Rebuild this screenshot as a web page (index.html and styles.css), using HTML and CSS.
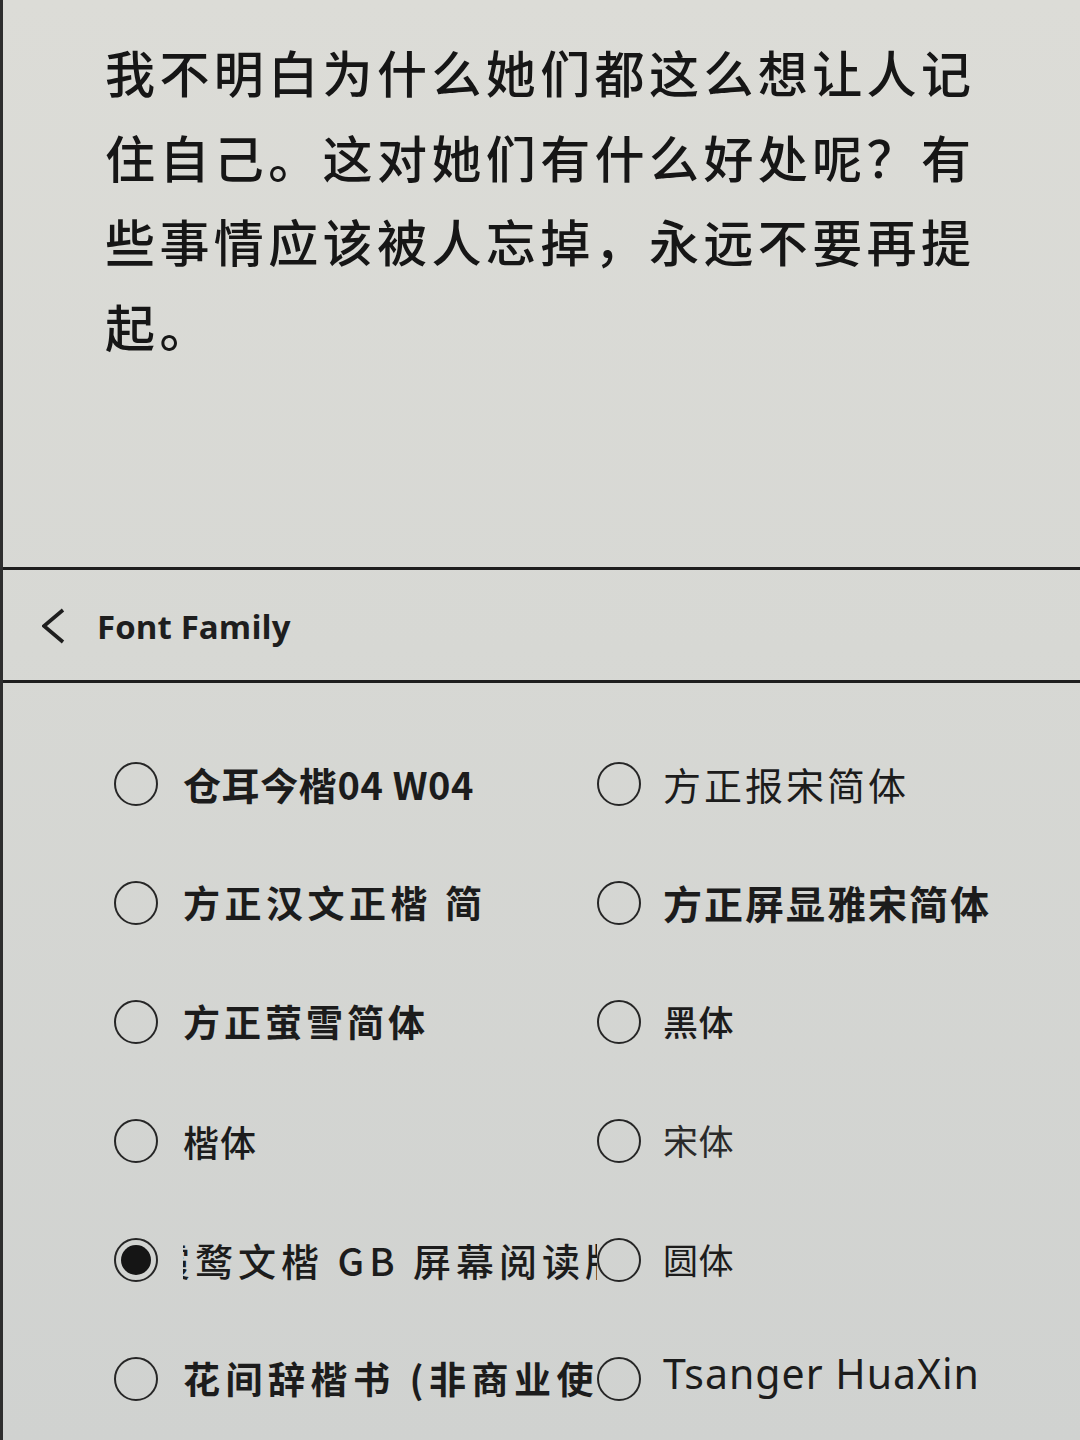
FILE: index.html
```html
<!DOCTYPE html>
<html lang="zh-CN">
<head>
<meta charset="utf-8">
<title>Font Family</title>
<link rel="stylesheet" href="styles.css">
</head>
<body>
<div class="page">
  <section class="reading">
    <p class="passage">我不明白为什么她们都这么想让人记住自己。这对她们有什么好处呢？有些事情应该被人忘掉，永远不要再提起。</p>
  </section>
  <header class="panel-header">
    <svg class="back" width="24" height="36" viewBox="0 0 24 36" aria-hidden="true">
      <polyline points="21,2 2,18 21,34" fill="none" stroke="#1e1e1e" stroke-width="3.6" stroke-linejoin="miter"/>
    </svg>
    <h1 class="title">Font Family</h1>
  </header>
  <ul class="options">
    <li class="opt left"><span class="radio"></span><span class="label l-cang">仓耳今楷04 W04</span></li>
    <li class="opt right"><span class="radio"></span><span class="label r-bao">方正报宋简体</span></li>
    <li class="opt left"><span class="radio"></span><span class="label l-han">方正汉文正楷 简</span></li>
    <li class="opt right"><span class="radio"></span><span class="label r-ping">方正屏显雅宋简体</span></li>
    <li class="opt left"><span class="radio"></span><span class="label l-ying">方正萤雪简体</span></li>
    <li class="opt right"><span class="radio"></span><span class="label r-hei">黑体</span></li>
    <li class="opt left"><span class="radio"></span><span class="label l-kai">楷体</span></li>
    <li class="opt right"><span class="radio"></span><span class="label r-song">宋体</span></li>
    <li class="opt left"><span class="radio selected"></span><span class="label l-xia"><span class="scroll">霞鹜文楷 GB 屏幕阅读版</span></span></li>
    <li class="opt right"><span class="radio"></span><span class="label r-yuan">圆体</span></li>
    <li class="opt left"><span class="radio"></span><span class="label l-hua">花间辞楷书 (非商业使用)</span></li>
    <li class="opt right"><span class="radio"></span><span class="label r-ts">Tsanger HuaXin</span></li>
  </ul>
</div>
</body>
</html>
```
FILE: styles.css
```css
html, body {
  margin: 0;
  padding: 0;
}
body {
  width: 1080px;
  height: 1440px;
  overflow: hidden;
  background: #d6d6d2;
  color: #1c1c1c;
  font-family: "Noto Sans CJK SC", "Noto Sans", sans-serif;
}
.page {
  width: 1080px;
  height: 1440px;
  box-sizing: border-box;
  border-left: 3px solid #2e2e2e;
  background: linear-gradient(180deg, #dcdcd7 0%, #d7d8d4 45%, #d0d2d0 100%);
  display: flex;
  flex-direction: column;
}
.reading {
  height: 570px;
  box-sizing: border-box;
  padding: 29px 0 0 102px;
  border-bottom: 3px solid #1e1e1e;
  flex: none;
}
.passage {
  margin: 0;
  width: 900px;
  font-size: 50px;
  line-height: 84.5px;
  letter-spacing: 4.4px;
  font-weight: 500;
  color: #161616;
}
.panel-header {
  height: 113px;
  box-sizing: border-box;
  border-bottom: 3px solid #1e1e1e;
  display: flex;
  align-items: center;
  padding-left: 39px;
  gap: 31px;
  flex: none;
}
.back {
  display: block;
  margin-top: 2px;
}
.title {
  margin: 0;
  font-family: "Open Sans", "Noto Sans", sans-serif;
  font-weight: 700;
  font-size: 33px;
  letter-spacing: 0.1px;
  color: #1e1e1e;
  margin-top: 3px;
}
.options {
  list-style: none;
  margin: 0;
  padding: 41px 0 0 111px;
  display: grid;
  grid-template-columns: 483px 1fr;
  grid-auto-rows: 119px;
}
.opt {
  display: flex;
  align-items: center;
  min-width: 0;
}
.opt.left {
  gap: 25px;
}
.opt.right {
  gap: 22px;
}
.radio {
  flex: none;
  width: 44px;
  height: 44px;
  box-sizing: border-box;
  border: 2.6px solid #262626;
  border-radius: 50%;
  display: flex;
  align-items: center;
  justify-content: center;
}
.radio.selected::after {
  content: "";
  width: 30px;
  height: 30px;
  border-radius: 50%;
  background: #151515;
}
.label {
  font-size: 36px;
  line-height: 1.5;
  white-space: nowrap;
  color: #1c1c1c;
}
.opt.left .label {
  flex: 1;
  overflow: hidden;
}
.l-cang { font-size: 38px; font-weight: 700; letter-spacing: 0.6px; }
.l-han { font-size: 37px; font-weight: 700; letter-spacing: 4.5px; }
.l-ying { font-size: 37px; font-weight: 700; letter-spacing: 4px; }
.l-kai { font-size: 36px; font-weight: 500; letter-spacing: 1px; }
.l-xia { font-size: 38px; font-weight: 500; letter-spacing: 5px; }
.l-xia .scroll { display: inline-block; margin-left: -31px; }
.l-hua { font-size: 37px; font-weight: 700; letter-spacing: 5.5px; }
.r-bao { font-size: 38px; font-weight: 400; letter-spacing: 3px; }
.r-ping { font-size: 39px; font-weight: 700; letter-spacing: 2px; }
.r-hei { font-size: 35px; font-weight: 500; letter-spacing: 0.5px; }
.r-song { font-size: 35px; font-weight: 400; letter-spacing: 0.5px; color: #2a2a2a; }
.r-yuan { font-size: 35px; font-weight: 400; letter-spacing: 0.5px; }
.r-ts {
  font-family: "Noto Sans", "Open Sans", sans-serif;
  font-size: 41px;
  font-weight: 400;
  letter-spacing: 1px;
  margin-top: -10px;
}
```
